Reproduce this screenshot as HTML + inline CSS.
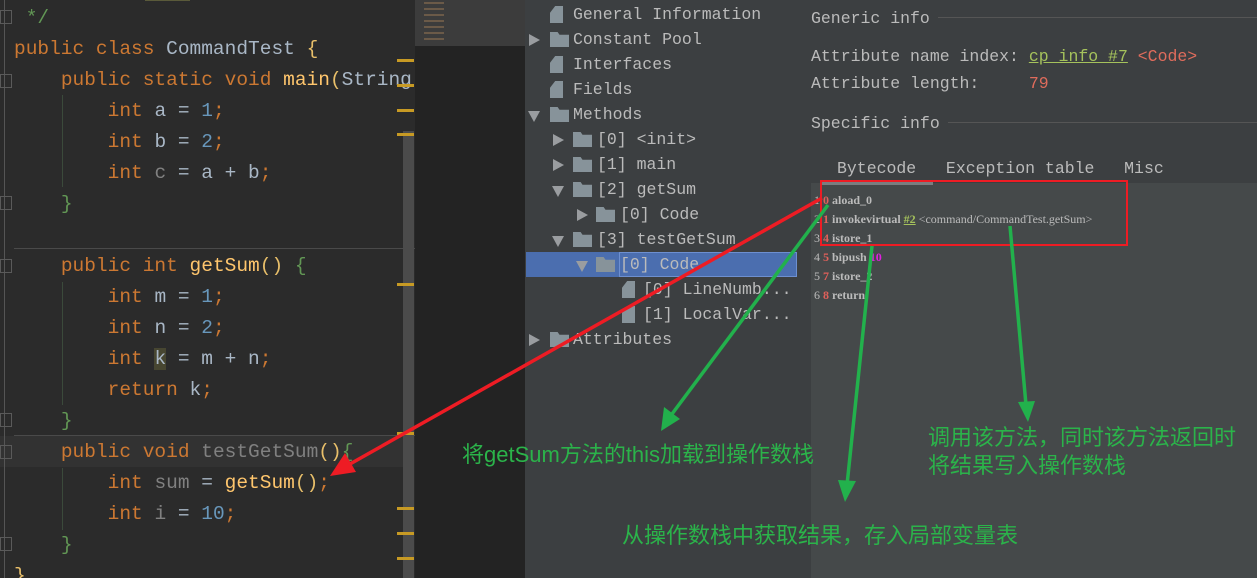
<!DOCTYPE html>
<html><head><meta charset="utf-8"><style>
*{margin:0;padding:0;box-sizing:border-box}
html,body{width:1257px;height:578px;overflow:hidden}
body{background:#2b2b2b;position:relative;font-family:"Liberation Mono",monospace}
.a{position:absolute;white-space:pre}
.code{font-size:19.5px;line-height:31px;color:#a9b7c6}
.k{color:#cc7832}.n{color:#6897bb}.f{color:#ffc66d}.g{color:#629755}.y{color:#e8bf6a}.gr{color:#808080}
.tree{font-size:16.5px;color:#bbbbbb;line-height:25px}
.fold{position:absolute;width:12px;height:14px;border:1px solid #5a5a5a;left:0}
.mk{position:absolute;left:397px;width:17px;height:3px;background:#c79a24}
.r{position:absolute;font-size:16.5px;color:#bbbbbb;line-height:25px;white-space:pre;height:25px}
.fi{position:absolute;top:5px;width:19px;height:15px;background:#87939a;clip-path:polygon(0 0,40% 0,50% 18%,100% 18%,100% 100%,0 100%)}
.fl{position:absolute;top:4px;width:13px;height:17px;background:#87939a;clip-path:polygon(40% 0,100% 0,100% 100%,0 100%,0 40%)}
.tr{position:absolute;top:7px;width:0;height:0;border-top:6px solid transparent;border-bottom:6px solid transparent;border-left:11px solid #9a9da0}
.td{position:absolute;top:9px;width:0;height:0;border-left:6px solid transparent;border-right:6px solid transparent;border-top:11px solid #9a9da0}
.bc{font-family:"Liberation Serif",serif;font-weight:bold;font-size:12px;color:#bbbbbb}
.cn{font-family:"Liberation Sans","Noto Sans CJK SC",sans-serif;color:#2bb34a;font-size:22px}
</style></head><body>
<div class="a" style="left:0;top:436px;width:403px;height:31px;background:#323232"></div>
<div class="a" style="left:145px;top:0;width:45px;height:1px;background:#5a5a3a"></div>
<div class="a" style="left:4px;top:0;width:1px;height:578px;background:#555"></div>
<div class="a" style="left:14px;top:248px;width:401px;height:1px;background:#4a4a4a"></div>
<div class="a" style="left:14px;top:435px;width:401px;height:1px;background:#4a4a4a"></div>
<div class="a" style="left:62px;top:95px;width:1px;height:92px;background:#3b4a3b"></div>
<div class="a" style="left:62px;top:282px;width:1px;height:123px;background:#3b4a3b"></div>
<div class="a" style="left:62px;top:468px;width:1px;height:62px;background:#3b4a3b"></div>
<div class="fold" style="top:10px"></div><div class="fold" style="top:74px"></div><div class="fold" style="top:196px"></div><div class="fold" style="top:259px"></div><div class="fold" style="top:413px"></div><div class="fold" style="top:445px"></div><div class="fold" style="top:537px"></div>
<div class="a code" style="left:14px;top:3px"><span class="g"> */</span>
<span class="k">public class </span>CommandTest <span class="y">{</span>
    <span class="k">public static void </span><span class="f">main</span><span class="y">(</span>String
        <span class="k">int </span>a = <span class="n">1</span><span class="k">;</span>
        <span class="k">int </span>b = <span class="n">2</span><span class="k">;</span>
        <span class="k">int </span><span class="gr">c</span> = a + b<span class="k">;</span>
    <span class="g">}</span>

    <span class="k">public int </span><span class="f">getSum</span><span class="y">()</span> <span class="g">{</span>
        <span class="k">int </span>m = <span class="n">1</span><span class="k">;</span>
        <span class="k">int </span>n = <span class="n">2</span><span class="k">;</span>
        <span class="k">int </span><span style="background:#474631">k</span> = m + n<span class="k">;</span>
        <span class="k">return </span>k<span class="k">;</span>
    <span class="g">}</span>
    <span class="k">public void </span><span class="gr">testGetSum</span><span class="y">()</span><span class="g">{</span>
        <span class="k">int </span><span class="gr">sum</span> = <span class="f">getSum</span><span class="y">()</span><span class="k">;</span>
        <span class="k">int </span><span class="gr">i</span> = <span class="n">10</span><span class="k">;</span>
    <span class="g">}</span>
<span class="y">}</span></div>
<div class="a" style="left:403px;top:131px;width:11px;height:447px;background:#4b4b4b"></div>
<div class="mk" style="top:59px"></div><div class="mk" style="top:84px"></div><div class="mk" style="top:109px"></div><div class="mk" style="top:133px"></div><div class="mk" style="top:283px"></div><div class="mk" style="top:432px"></div><div class="mk" style="top:507px"></div><div class="mk" style="top:532px"></div><div class="mk" style="top:557px"></div>
<div class="a" style="left:415px;top:0;width:110px;height:578px;background:#232323"></div>
<div class="a" style="left:415px;top:0;width:110px;height:46px;background:#3c3c3c"></div>
<div class="a" style="left:424px;top:0;width:20px;height:40px;background:repeating-linear-gradient(#3c3c3c 0 2px,#6b5a48 2px 4px,#3c3c3c 4px 6px)"></div>
<div class="a" style="left:525px;top:0;width:285px;height:578px;background:#3c3f41"></div>
<div class="a" style="left:526px;top:252px;width:271px;height:25px;background:#4b6eaf"></div>
<div class="r" style="left:0;top:2px"><span class="fl" style="left:550px"></span><span style="position:absolute;left:573px">General Information</span></div>
<div class="r" style="left:0;top:27px"><span class="tr" style="left:529px"></span><span class="fi" style="left:550px"></span><span style="position:absolute;left:573px">Constant Pool</span></div>
<div class="r" style="left:0;top:52px"><span class="fl" style="left:550px"></span><span style="position:absolute;left:573px">Interfaces</span></div>
<div class="r" style="left:0;top:77px"><span class="fl" style="left:550px"></span><span style="position:absolute;left:573px">Fields</span></div>
<div class="r" style="left:0;top:102px"><span class="td" style="left:528px"></span><span class="fi" style="left:550px"></span><span style="position:absolute;left:573px">Methods</span></div>
<div class="r" style="left:0;top:127px"><span class="tr" style="left:553px"></span><span class="fi" style="left:573px"></span><span style="position:absolute;left:597px">[0] &lt;init&gt;</span></div>
<div class="r" style="left:0;top:152px"><span class="tr" style="left:553px"></span><span class="fi" style="left:573px"></span><span style="position:absolute;left:597px">[1] main</span></div>
<div class="r" style="left:0;top:177px"><span class="td" style="left:552px"></span><span class="fi" style="left:573px"></span><span style="position:absolute;left:597px">[2] getSum</span></div>
<div class="r" style="left:0;top:202px"><span class="tr" style="left:577px"></span><span class="fi" style="left:596px"></span><span style="position:absolute;left:620px">[0] Code</span></div>
<div class="r" style="left:0;top:227px"><span class="td" style="left:552px"></span><span class="fi" style="left:573px"></span><span style="position:absolute;left:597px">[3] testGetSum</span></div>
<div class="r" style="left:0;top:252px"><span class="td" style="left:576px"></span><span class="fi" style="left:596px"></span><span style="position:absolute;left:619px;top:0;width:178px;height:25px;border:1px solid #6d8fd0"></span><span style="position:absolute;left:620px">[0] Code</span></div>
<div class="r" style="left:0;top:277px"><span class="fl" style="left:622px"></span><span style="position:absolute;left:643px">[0] LineNumb...</span></div>
<div class="r" style="left:0;top:302px"><span class="fl" style="left:622px"></span><span style="position:absolute;left:643px">[1] LocalVar...</span></div>
<div class="r" style="left:0;top:327px"><span class="tr" style="left:529px"></span><span class="fi" style="left:550px"></span><span style="position:absolute;left:573px">Attributes</span></div>
<div class="a" style="left:810px;top:0;width:447px;height:578px;background:#3c3f41"></div>
<div class="a tree" style="left:811px;top:6px">Generic info</div>
<div class="a" style="left:938px;top:17px;width:319px;height:1px;background:#555"></div>
<div class="a tree" style="left:811px;top:44px">Attribute name index: <span style="color:#a5c25c;text-decoration:underline">cp_info #7</span> <span style="color:#e06c5c">&lt;Code&gt;</span></div>
<div class="a tree" style="left:811px;top:71px">Attribute length:     <span style="color:#e06c5c">79</span></div>
<div class="a tree" style="left:811px;top:111px">Specific info</div>
<div class="a" style="left:948px;top:122px;width:309px;height:1px;background:#555"></div>
<div class="a tree" style="left:837px;top:156px">Bytecode   Exception table   Misc</div>
<div class="a" style="left:811px;top:183px;width:446px;height:395px;background:#45494a"></div>
<div class="a" style="left:822px;top:181px;width:111px;height:4px;background:#7a7d80"></div>
<div class="a bc" style="left:814px;top:191px;line-height:19px"><span style="font-weight:normal">1</span> <span style="color:#e0605a">0</span> aload_0
<span style="font-weight:normal">2</span> <span style="color:#e0605a">1</span> invokevirtual <span style="color:#a5c25c;text-decoration:underline">#2</span> <span style="font-weight:normal">&lt;command/CommandTest.getSum&gt;</span>
<span style="font-weight:normal">3</span> <span style="color:#e0605a">4</span> istore_1
<span style="font-weight:normal">4</span> <span style="color:#e0605a">5</span> bipush <span style="color:#e020e0">10</span>
<span style="font-weight:normal">5</span> <span style="color:#e0605a">7</span> istore_2
<span style="font-weight:normal">6</span> <span style="color:#e0605a">8</span> return</div>
<div class="a" style="left:820px;top:180px;width:308px;height:66px;border:2px solid #ee1c24"></div>
<svg class="a" style="left:0;top:0" width="1257" height="578">
<line x1="822" y1="198" x2="350" y2="464" stroke="#ee1c24" stroke-width="3.5"/>
<polygon points="330,476 345,453 356,472" fill="#ee1c24"/>
<g stroke="#22b14c" stroke-width="3.5">
<line x1="828" y1="205" x2="672" y2="414"/>
<line x1="872" y1="246" x2="847" y2="485"/>
<line x1="1010" y1="226" x2="1026" y2="405"/>
</g>
<g fill="#22b14c">
<polygon points="661,431 664,407 680,419"/>
<polygon points="845,502 838,480 856,481"/>
<polygon points="1028,422 1018,402 1035,401"/>
</g>
</svg>
<div class="a cn" style="left:462px;top:437px">将getSum方法的this加载到操作数栈</div>
<div class="a cn" style="left:928px;top:424px;line-height:28px">调用该方法，同时该方法返回时
将结果写入操作数栈</div>
<div class="a cn" style="left:622px;top:518px">从操作数栈中获取结果，存入局部变量表</div>
</body></html>
